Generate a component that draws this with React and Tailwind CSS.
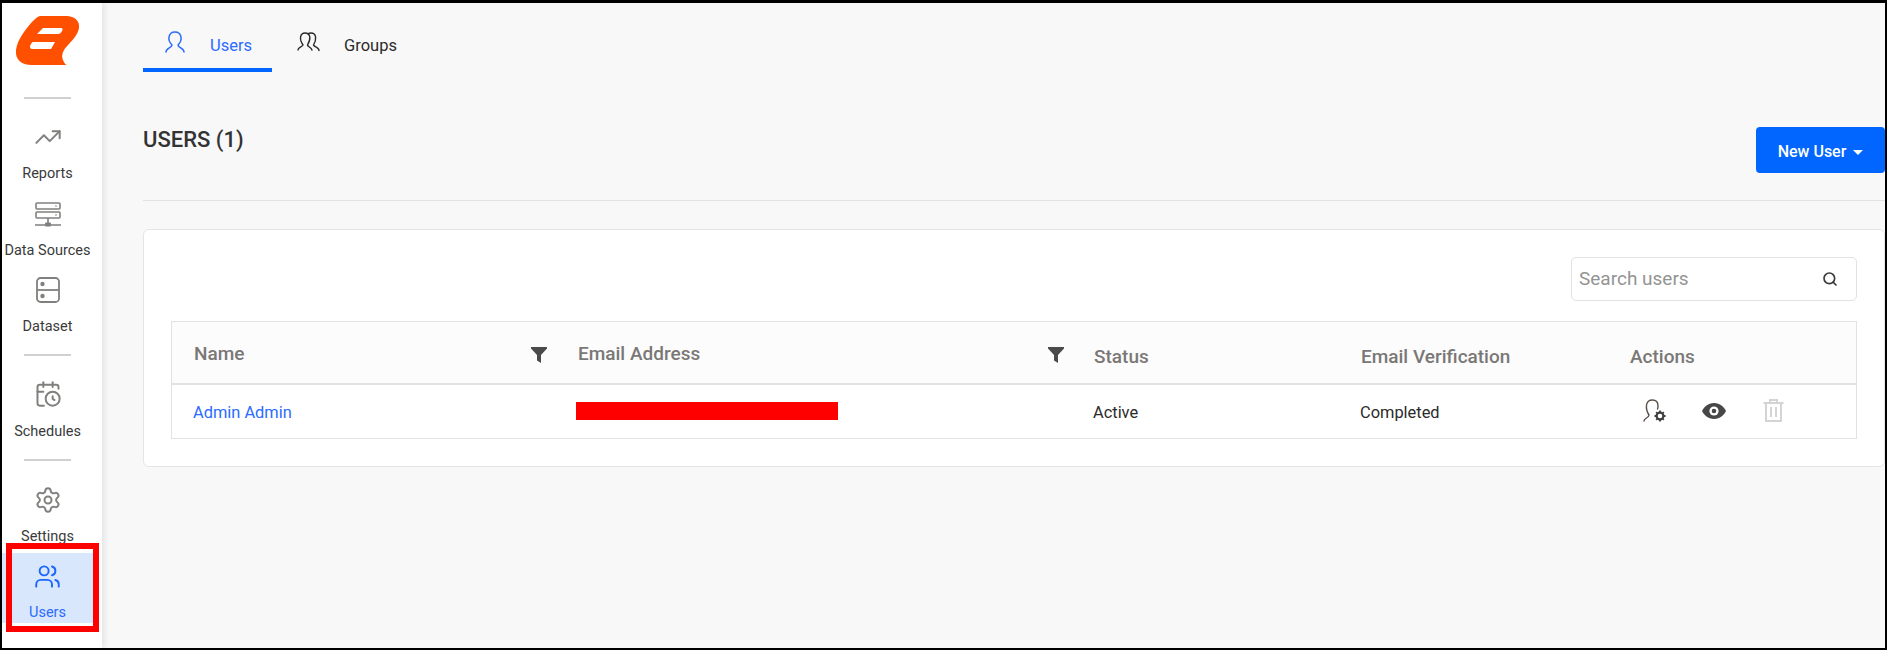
import React from 'react'
import { TrendingUp, CalendarClock, Settings, Users, Search } from 'lucide-react'

function Logo() {
    return (
        <svg width="66" height="52" viewBox="15 15 66 52">
            <path
                fill="#ff5000"
                d="M41 16 H66 C75 16 80 21 79 28 C78 34 73 40 68 45 C63 50 61 55 63 60 C64 63 66 65 67 65 H32 C21 65 15 59 16 50 C17 40 27 27 33 21 C36 18 38 16 41 16 Z"
            />
            <path fill="#fff" d="M43 28 H61 C63 28 63 30 62 31 C61 33 60 34 58 34 H37 Z" />
            <path fill="#fff" d="M33 42 H55 L51 49 H32 C30 49 30 47 30 46 C31 44 32 42 33 42 Z" />
        </svg>
    )
}

function DataSourcesIcon() {
    return (
        <svg width="28" height="26" viewBox="0 0 28 26" fill="none" stroke="#80807e" strokeWidth="1.6">
            <rect x="2" y="1" width="24" height="6" rx="1" />
            <rect x="2" y="10" width="24" height="6" rx="1" />
            <path d="M14 16 V22 M1 23 H27" />
            <rect x="11" y="20.5" width="6" height="4" fill="#80807e" stroke="none" rx="1" />
            <circle cx="22" cy="4" r="0.8" fill="#80807e" stroke="none" />
            <circle cx="22" cy="13" r="0.8" fill="#80807e" stroke="none" />
        </svg>
    )
}

function DatasetIcon() {
    return (
        <svg width="24" height="26" viewBox="0 0 24 26" fill="none" stroke="#80807e" strokeWidth="1.8">
            <rect x="1" y="1" width="22" height="24" rx="3.5" />
            <path d="M1 13 H23" />
            <circle cx="6.5" cy="7" r="2.2" fill="#80807e" stroke="none" />
            <circle cx="6.5" cy="19" r="2.2" fill="#80807e" stroke="none" />
        </svg>
    )
}

function UserOutline({ className }) {
    return (
        <svg className={className} width="20" height="22" viewBox="0 0 20 22" fill="none" stroke="currentColor" strokeWidth="1.5" strokeLinecap="round">
            <path d="M1 21 C1 17 7 17 7 14 C4 11 3.6 8 4 6 C4.6 2.5 7 1 10 1 C13 1 15.4 2.5 16 6 C16.4 8 16 11 13 14 C13 17 19 17 19 21" />
        </svg>
    )
}

function GroupOutline() {
    return (
        <svg width="23" height="20" viewBox="0 0 23 20" fill="none" stroke="#2b2b2b" strokeWidth="1.4" strokeLinecap="round">
            <path d="M1 18 C1 15 5 15 6 13 C4 10 3 8 3.6 5 C4 2.5 6 1 8 1 C10.5 1 12.4 2.5 12.8 5 C13.2 8 12 10.5 10.5 13 C11 15 14 15 15 18" />
            <path d="M11 1.8 C12 1 13 1 14 1 C16.5 1 18.2 2.5 18.6 5 C19 8 18 10.5 16.5 13 C17 15 22 15 22 18.5" />
        </svg>
    )
}

function FilterIcon() {
    return (
        <svg width="16" height="16" viewBox="0 0 16 16" fill="#4a4a4a">
            <path d="M0 0 H16 V1.5 L10 8 V16 L6 13.5 V8 L0 1.5 Z" />
        </svg>
    )
}

function UserGearIcon() {
    return (
        <svg width="23" height="23" viewBox="0 0 23 23" fill="none">
            <path d="M1 22 C1 19 6 19 6 16 C4 13 3 10 3.5 6 C4 3 6 1 9.5 1 C13 1 15 3 15 7 C15 8 15 9 14.5 10" stroke="#5a5048" strokeWidth="1.4" strokeLinecap="round" />
            <circle cx="17" cy="17" r="3.4" stroke="#3f3f3f" strokeWidth="2.2" />
            <path d="M17 11.5 V13 M17 21 V22.5 M11.5 17 H13 M21 17 H22.5 M13.2 13.2 L14.2 14.2 M19.8 19.8 L20.8 20.8 M20.8 13.2 L19.8 14.2 M14.2 19.8 L13.2 20.8" stroke="#3f3f3f" strokeWidth="1.8" />
        </svg>
    )
}

function EyeIcon() {
    return (
        <svg width="24" height="16" viewBox="0 0 24 16">
            <path fill="#474747" d="M12 0 C18 0 22 4 24 8 C22 12 18 16 12 16 C6 16 2 12 0 8 C2 4 6 0 12 0 Z" />
            <circle cx="12" cy="8" r="4.6" fill="#fff" />
            <circle cx="12" cy="8" r="2.3" fill="#474747" />
        </svg>
    )
}

function TrashIcon() {
    return (
        <svg width="21" height="23" viewBox="0 0 21 23" fill="none" stroke="#d4d4d4" strokeWidth="2">
            <path d="M0.5 4 H20.5 M7 4 V1 H14 V4 M3 4 V22 H18 V4 M8 8 V18 M13 8 V18" />
        </svg>
    )
}

function NavItem({ icon, label, height }) {
    return (
        <div className={`flex flex-col items-center justify-between ${height}`}>
            <div className="flex h-[26px] items-center">{icon}</div>
            <span className="text-[14.5px] leading-4 text-[#3a3a3a] whitespace-nowrap">{label}</span>
        </div>
    )
}

export default function App() {
    const headers = [
        { label: 'Name', filter: true, cls: 'pl-[22px] pr-[10px]', offset: 'pt-[4px]' },
        { label: 'Email Address', filter: true, cls: 'pl-[21px] pr-[10px]', offset: 'pt-[4px]' },
        { label: 'Status', cls: 'pl-[20px]', offset: 'pt-[9px]' },
        { label: 'Email Verification', cls: 'pl-[22px]', offset: 'pt-[9px]' },
        { label: 'Actions', cls: 'pl-[21px]', offset: 'pt-[9px]' },
    ]

    return (
        <div className="h-[650px] w-[1887px] overflow-hidden border-t-[3px] border-x-2 border-b-2 border-black bg-[#f8f8f8] flex font-['Roboto',sans-serif]">
            {/* Sidebar */}
            <aside className="w-[100px] shrink-0 bg-white shadow-[3px_0_6px_rgba(0,0,0,0.08)] flex flex-col z-10">
                <div className="w-[91px]">
                    <div className="pl-[13px] pt-[12px] h-[94px]">
                        <Logo />
                    </div>
                    <div className="mx-[22px] border-t-2 border-[#d0d0d0]" />

                    <div className="pt-[25px] flex flex-col">
                        <NavItem height="h-[58px]" label="Reports" icon={<TrendingUp size={28} color="#80807e" strokeWidth={1.7} />} />
                        <div className="mt-[20px]"><NavItem height="h-[57px]" label="Data Sources" icon={<DataSourcesIcon />} /></div>
                        <div className="mt-[18px]"><NavItem height="h-[58px]" label="Dataset" icon={<DatasetIcon />} /></div>
                    </div>
                    <div className="mx-[22px] mt-[19px] border-t-2 border-[#d0d0d0]" />

                    <div className="pt-[25px]">
                        <NavItem height="h-[59px]" label="Schedules" icon={<CalendarClock size={28} color="#80807e" strokeWidth={1.7} />} />
                    </div>
                    <div className="mx-[22px] mt-[19px] border-t-2 border-[#d0d0d0]" />

                    <div className="pt-[26px]">
                        <NavItem height="h-[58px]" label="Settings" icon={<Settings size={28} color="#80807e" strokeWidth={1.7} />} />
                    </div>

                    <div className="relative mt-[8px] h-[70px] bg-[#d9e7fd] flex flex-col items-center pt-[10px]">
                        <Users size={27} color="#1a66ff" strokeWidth={1.7} />
                        <span className="mt-[15px] text-[14.5px] leading-4 text-[#2b6bff]">Users</span>
                        {/* red annotation */}
                        <div className="absolute left-[4px] top-[-10px] w-[93px] h-[89px] border-[6px] border-[#ff0000] pointer-events-none" />
                    </div>
                </div>
            </aside>

            {/* Main */}
            <main className="flex-1 min-w-0 pl-[41px]">
                <div className="flex h-[69px] items-stretch">
                    <div className="w-[129px] border-b-4 border-[#0066ff] flex pl-[22px] pt-[27px] gap-[25px] text-[#2b6bff]">
                        <UserOutline className="mt-[1px]" />
                        <span className="text-[16.5px] leading-[22px] mt-[5px]">Users</span>
                    </div>
                    <div className="flex pl-[25px] pt-[29px] gap-[24px] text-[#2b2b2b]">
                        <GroupOutline />
                        <span className="text-[16.5px] leading-[22px] mt-[3px]">Groups</span>
                    </div>
                </div>

                <div className="flex justify-between h-[129px] border-b border-[#e2e2e2]">
                    <h1 className="mt-[54px] text-[22px] leading-7 font-medium text-[#333]">USERS (1)</h1>
                    <button className="mt-[55px] h-[46px] w-[129px] pt-[3px] rounded-[4px] bg-[#0066ff] text-white text-[16px] font-medium flex items-center justify-center gap-[7px]">
                        New User
                        <span className="mt-[1px] border-x-[5px] border-t-[5px] border-x-transparent border-t-white" />
                    </button>
                </div>

                <section className="mt-[28px] h-[238px] rounded-[6px] border border-[#e3e5e8] bg-white pl-[27px] pr-[27px] pt-[27px]">
                    <div className="flex justify-end">
                        <div className="w-[286px] h-[44px] rounded-[5px] border border-[#e2e2e2] flex items-center justify-between pl-[7px] pr-[18px]">
                            <span className="text-[19px] text-[#949494]">Search users</span>
                            <Search size={16} color="#3a3a3a" strokeWidth={2.5} />
                        </div>
                    </div>

                    <div className="mt-[20px] border border-[#e2e2e2]">
                        <div className="grid grid-cols-[385px_517px_265px_270px_1fr] h-[63px] bg-[#fcfcfc] border-b-2 border-[#e2e2e2] items-center">
                            {headers.map((h) => (
                                <div key={h.label} className={`flex items-center justify-between ${h.cls} ${h.offset}`}>
                                    <span className="text-[19px] font-medium text-[#7a7876]">{h.label}</span>
                                    {h.filter && <FilterIcon />}
                                </div>
                            ))}
                        </div>
                        <div className="grid grid-cols-[385px_517px_265px_270px_1fr] h-[53px] items-center text-[16.4px] text-[#2b2b2b]">
                            <div className="pl-[21px] pt-[3px] text-[#2b6bff]">Admin Admin</div>
                            <div className="pl-[19px] pb-[1px]"><div className="w-[262px] h-[18px] bg-[#ff0000]" /></div>
                            <div className="pl-[19px] pt-[3px]">Active</div>
                            <div className="pl-[21px] pt-[3px]">Completed</div>
                            <div className="pl-[34px] pb-[2px] flex items-center">
                                <UserGearIcon />
                                <span className="ml-[36px]"><EyeIcon /></span>
                                <span className="ml-[37px]"><TrashIcon /></span>
                            </div>
                        </div>
                    </div>
                </section>
            </main>
        </div>
    )
}
